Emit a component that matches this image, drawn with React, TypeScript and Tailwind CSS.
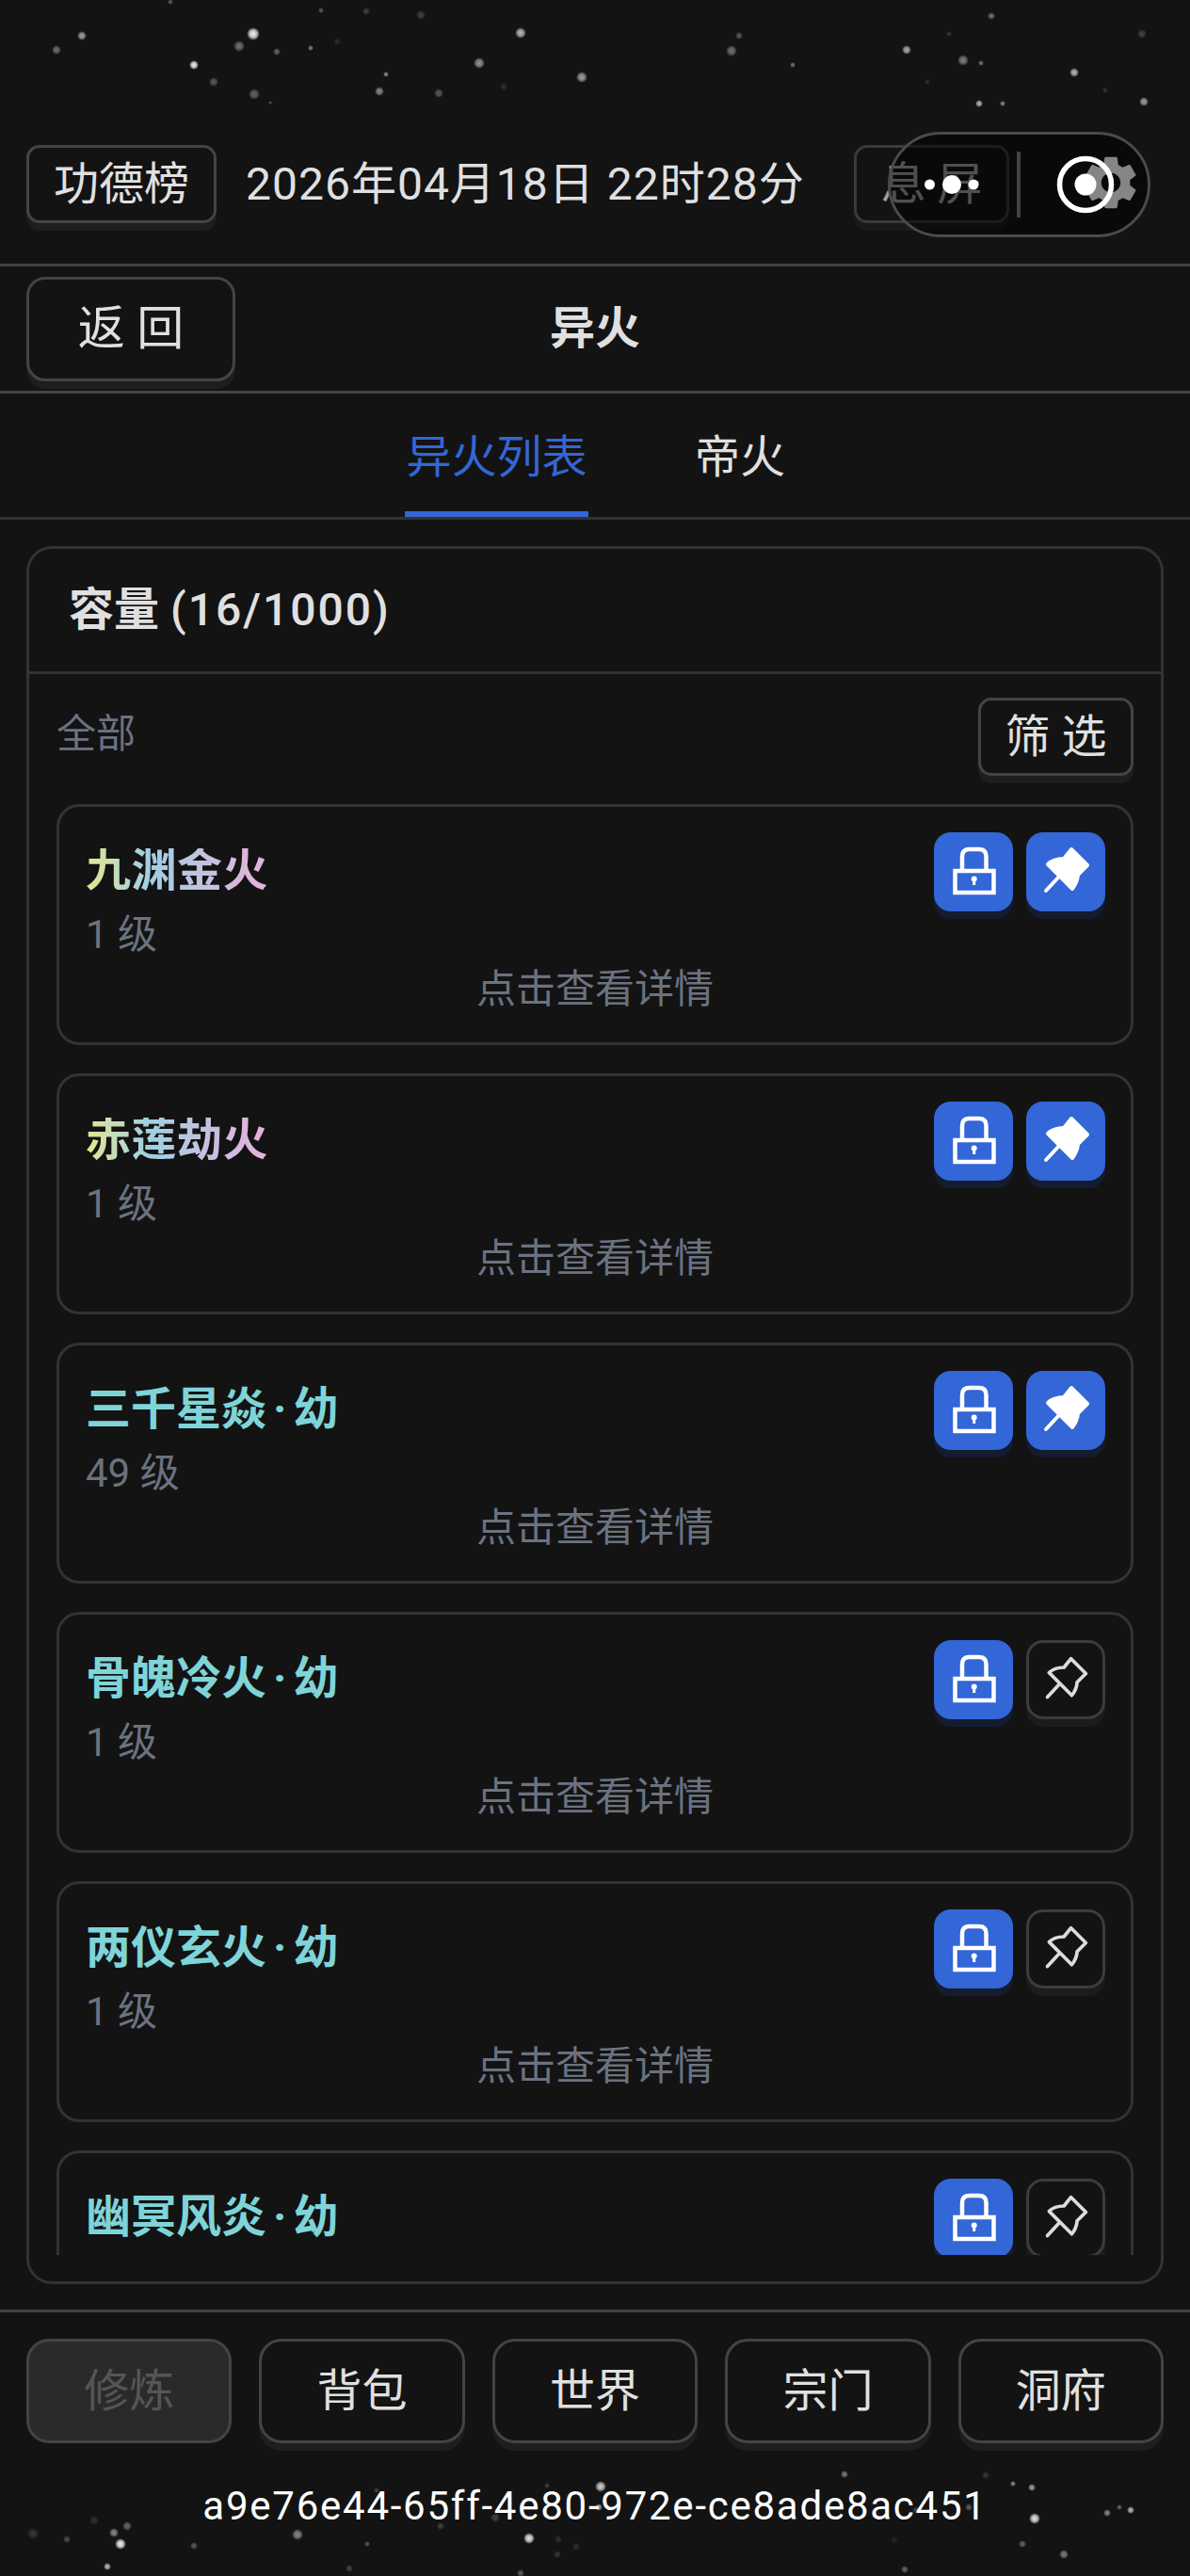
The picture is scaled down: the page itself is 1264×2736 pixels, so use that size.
import React from 'react';

// x, y, radius, opacity
const topStars = [
  [87, 38, 5, 0.6], [60, 53, 5, 0.4], [269, 36, 7, 0.95], [254, 49, 6, 0.4], [294, 55, 4, 0.35], [330, 51, 3, 0.45],
  [206, 69, 5, 0.95], [227, 87, 5, 0.3], [270, 100, 6, 0.35], [410, 79, 3, 0.5], [403, 97, 5, 0.5], [466, 99, 5, 0.3],
  [509, 67, 6, 0.55], [553, 35, 6, 0.7], [618, 82, 6, 0.6], [341, 11, 3, 0.3], [389, 12, 4, 0.2], [447, 16, 5, 0.2],
  [181, 2, 3, 0.3], [358, 44, 4, 0.1], [535, 92, 4, 0.12], [287, 109, 2, 0.3], [785, 38, 4, 0.3], [777, 54, 6, 0.4],
  [842, 69, 3, 0.4], [963, 53, 5, 0.65], [1023, 64, 6, 0.45], [1042, 67, 3, 0.4], [1053, 17, 4, 0.4], [1008, 36, 3, 0.15],
  [1213, 36, 5, 0.2], [1141, 77, 5, 0.7], [1174, 96, 3, 0.15], [985, 87, 3, 0.12], [1040, 110, 4, 0.7], [1065, 110, 3, 0.5],
  [1215, 108, 5, 0.6],
];

const bottomStars = [
  [135, 2683, 5, 0.35], [121, 2690, 5, 0.5], [128, 2702, 6, 0.95], [100, 2677, 5, 0.12], [35, 2691, 6, 0.15], [71, 2697, 4, 0.25],
  [206, 2704, 4, 0.3], [114, 2726, 4, 0.7], [316, 2692, 6, 0.5], [390, 2702, 3, 0.3], [562, 2696, 6, 0.9], [593, 2697, 4, 0.12],
  [612, 2705, 4, 0.12], [592, 2713, 4, 0.15], [371, 2728, 4, 0.2], [553, 2733, 4, 0.3], [526, 2674, 5, 0.2], [468, 2683, 4, 0.2],
  [400, 2645, 3, 0.2], [581, 2640, 3, 0.2], [638, 2641, 6, 0.8], [636, 2663, 4, 0.6], [897, 2628, 4, 0.45], [1047, 2629, 4, 0.15],
  [1076, 2638, 3, 0.5], [1096, 2642, 4, 0.6], [1099, 2675, 6, 0.9], [1176, 2669, 4, 0.5], [1189, 2663, 3, 0.35], [1201, 2666, 4, 0.7],
  [1086, 2702, 4, 0.35], [1130, 2713, 5, 0.45], [961, 2729, 4, 0.35], [950, 2698, 4, 0.08], [1029, 2663, 4, 0.3], [973, 2666, 4, 0.2],
];

const Stars = () => (
  <svg className="absolute left-0 top-0 pointer-events-none" width="1264" height="2736">
    <defs>
      <radialGradient id="star">
        <stop offset="0%" stopColor="#fff" />
        <stop offset="55%" stopColor="#fff" stopOpacity="0.75" />
        <stop offset="100%" stopColor="#fff" stopOpacity="0" />
      </radialGradient>
    </defs>
    {[...topStars, ...bottomStars].map(([x, y, r, o], i) => (
      <circle key={i} cx={x} cy={y} r={r} opacity={o} fill="url(#star)" />
    ))}
  </svg>
);

const LockIcon = () => (
  <svg width="84" height="84" viewBox="0 0 84 84" fill="none" stroke="#fff" strokeWidth="4.5">
    <path d="M30 40V25.5Q30 18 38 18H47.5Q55.5 18 55.5 25.5V40" />
    <rect x="22.5" y="41" width="41" height="23" />
    <circle cx="42.7" cy="49.5" r="3" fill="#fff" stroke="none" />
    <rect x="41.2" y="50" width="3" height="6" fill="#fff" stroke="none" />
  </svg>
);

const PinIcon = ({ filled }: { filled: boolean }) => {
  const color = filled ? '#fff' : '#dcdcdc';
  return (
    <svg width="84" height="84" viewBox="0 0 84 84" fill="none" stroke={color} strokeWidth="4" strokeLinecap="round" strokeLinejoin="round">
      <path d="M48 18L65 35L55 45Q54.5 53 49 60L23 34Q29 28 40 28Z" fill={filled ? '#fff' : 'none'} />
      <path d="M34 48L21 62" />
    </svg>
  );
};

const items = [
  { name: '九渊金火', suffix: '', level: '1 级', rainbow: true, pinned: true },
  { name: '赤莲劫火', suffix: '', level: '1 级', rainbow: true, pinned: true },
  { name: '三千星焱', suffix: '幼', level: '49 级', rainbow: false, pinned: true },
  { name: '骨魄冷火', suffix: '幼', level: '1 级', rainbow: false, pinned: false },
  { name: '两仪玄火', suffix: '幼', level: '1 级', rainbow: false, pinned: false },
  { name: '幽冥风炎', suffix: '幼', level: '1 级', rainbow: false, pinned: false },
];

const Btn = 'border-[3px] border-[#444] shadow-[0_8px_0_#1e1e1e] bg-[#131313] flex items-center justify-center text-[#e0e0e0]';

const FireCard = ({ item }: { item: (typeof items)[number] }) => (
  <div className="relative h-[256px] shrink-0 rounded-[24px] border-[3px] border-[#333] pt-[27px] pl-[28px] pr-[27px]">
    <div className="flex justify-between">
      <div>
        <div className="h-[76px] pt-[5px] flex items-center">
          <span
            className={
              item.rainbow
                ? 'text-[48px] leading-none font-bold tracking-[0.5px] bg-gradient-to-r from-[#e6e68c] via-[#9fcfe3] via-35% to-[#e6b0da] bg-clip-text text-transparent'
                : 'text-[48px] leading-none font-bold text-[#7fd4d8]'
            }
          >
            {item.name}
            {item.suffix && <span className="mx-[7px]">·</span>}
            {item.suffix}
          </span>
        </div>
        <div className="text-[42px] leading-[56px] text-[#6b7280] mt-[5px]">{item.level}</div>
      </div>
      <div className="flex gap-[14px]">
        <div className="w-[84px] h-[84px] rounded-[18px] bg-[#3366d6] shadow-[0_8px_0_#141c30]">
          <LockIcon />
        </div>
        {item.pinned ? (
          <div className="w-[84px] h-[84px] rounded-[18px] bg-[#3366d6] shadow-[0_8px_0_#141c30]">
            <PinIcon filled />
          </div>
        ) : (
          <div className="w-[84px] h-[84px] rounded-[18px] border-[3px] border-[#3c3c3c] shadow-[0_8px_0_#1c1c1c] flex items-center justify-center shrink-0">
            <PinIcon filled={false} />
          </div>
        )}
      </div>
    </div>
    <div className="absolute left-0 right-0 top-[169px] text-center text-[42px] leading-[50px] text-[#6b7280]">点击查看详情</div>
  </div>
);

export default function App() {
  return (
    <div className="relative w-[1264px] h-[2736px] overflow-hidden bg-[#131313] font-[Roboto,'Noto_Sans_CJK_SC',sans-serif] text-[#e0e0e0]">
      <Stars />

      <div className="relative h-[280px] pt-[154px] pl-[28px] pr-[192px] flex items-start">
        <div className={`${Btn} w-[202px] h-[83px] rounded-[14px] text-[48px]`}>功德榜</div>
        <div className="ml-[31px] h-[83px] flex items-center text-[48px] tracking-[1px] whitespace-nowrap">2026年04月18日 22时28分</div>
        <div className="ml-auto w-[165px] h-[83px] rounded-[14px] border-[3px] border-[#3a3a3a] shadow-[0_8px_0_#1a1a1a] flex items-center justify-center text-[48px] text-[#a0a0a0] whitespace-pre">息 屏</div>
      </div>
      <div className="relative h-[138px] border-t-[3px] border-b-[3px] border-[#444] pl-[28px] pt-[11px]">
        <div className={`${Btn} w-[222px] h-[111px] rounded-[20px] text-[50px] whitespace-pre`}>返 回</div>
        <div className="absolute inset-x-0 top-[34px] text-center text-[48px] leading-[64px] font-bold">异火</div>
      </div>

      <div className="h-[134px] border-b-[3px] border-[#333] flex justify-center gap-[113px]">
        <div className="h-[131px] border-b-[6px] border-[#3366d6] text-[#3366d6] text-[48px] leading-[136px] w-[195px] text-center whitespace-nowrap">异火列表</div>
        <div className="text-[48px] leading-[136px] w-[96px] text-center whitespace-nowrap">帝火</div>
      </div>

      <div className="mx-[28px] mt-[28px] h-[1846px] rounded-[27px] border-[3px] border-[#333] flex flex-col relative">
        <div className="h-[133px] shrink-0 border-b-[3px] border-[#333] pl-[42px] flex items-center text-[48px] font-bold">
          容量 <span className="ml-[12px] font-medium tracking-[2px]">(16/1000)</span>
        </div>
        <div className="mx-[29px] h-[1679px] overflow-hidden">
          <div className="h-[138px] flex items-start justify-between pt-[25px]">
            <span className="h-[76px] flex items-center text-[42px] text-[#6b7280]">全部</span>
            <div className={`${Btn} w-[165px] h-[83px] rounded-[14px] text-[48px] whitespace-pre`}>筛 选</div>
          </div>
          <div className="flex flex-col gap-[30px]">
            {items.map((item) => (
              <FireCard key={item.name} item={item} />
            ))}
          </div>
        </div>
      </div>

      <div className="relative mt-[27px] border-t-[3px] border-[#444] pt-[28px] px-[28px] grid grid-cols-5 gap-x-[29px]">
        <div className="h-[111px] rounded-[24px] border-[3px] border-[#444] bg-[#2a2a2a] flex items-center justify-center text-[48px] text-[#555]">修炼</div>
        {['背包', '世界', '宗门', '洞府'].map((label) => (
          <div key={label} className={`${Btn} h-[111px] rounded-[24px] text-[48px]`}>{label}</div>
        ))}
      </div>
      <div className="relative mt-[42px] text-center text-[42px] leading-[50px] tracking-[1.75px] text-white">a9e76e44-65ff-4e80-972e-ce8ade8ac451</div>

      {/* floating capsule */}
      <div className="absolute left-[943px] top-[140px] w-[279px] h-[112px] rounded-full border-[3px] border-[#4a4a4a] bg-black/50">
        <svg width="273" height="106" viewBox="946 143 273 106">
          <circle cx="987.5" cy="196" r="5.5" fill="#fff" />
          <circle cx="1011" cy="196" r="10" fill="#fff" />
          <circle cx="1034" cy="196" r="5.5" fill="#fff" />
          <rect x="1080" y="161" width="4" height="70" fill="#444" />
        </svg>
      </div>
      <svg className="absolute left-[1146px] top-[160px]" width="68" height="68" viewBox="0 0 24 24" fill="#858585">
        <path d="M19.14 12.94c.04-.3.06-.61.06-.94 0-.32-.02-.64-.07-.94l2.03-1.58a.49.49 0 0 0 .12-.61l-1.92-3.32a.488.488 0 0 0-.59-.22l-2.39.96c-.5-.38-1.03-.7-1.62-.94l-.36-2.54a.484.484 0 0 0-.48-.41h-3.84c-.24 0-.43.17-.47.41l-.36 2.54c-.59.24-1.13.57-1.62.94l-2.39-.96c-.22-.08-.47 0-.59.22L2.74 8.87c-.12.21-.08.47.12.61l2.03 1.58c-.05.3-.09.63-.09.94s.02.64.07.94l-2.03 1.58a.49.49 0 0 0-.12.61l1.92 3.32c.12.22.37.29.59.22l2.39-.96c.5.38 1.03.7 1.62.94l.36 2.54c.05.24.24.41.48.41h3.84c.24 0 .44-.17.47-.41l.36-2.54c.59-.24 1.13-.56 1.62-.94l2.39.96c.22.08.47 0 .59-.22l1.92-3.32c.12-.22.07-.47-.12-.61l-2.01-1.58zM12 15.6c-1.98 0-3.6-1.62-3.6-3.6s1.62-3.6 3.6-3.6 3.6 1.62 3.6 3.6-1.62 3.6-3.6 3.6z" fillRule="evenodd" />
      </svg>
      <svg className="absolute left-[1122px] top-[165px]" width="62" height="62" viewBox="0 0 62 62">
        <circle cx="31" cy="31" r="27.5" fill="none" stroke="#fff" strokeWidth="5.5" />
        <circle cx="31" cy="31" r="11.5" fill="#fff" />
      </svg>
    </div>
  );
}
